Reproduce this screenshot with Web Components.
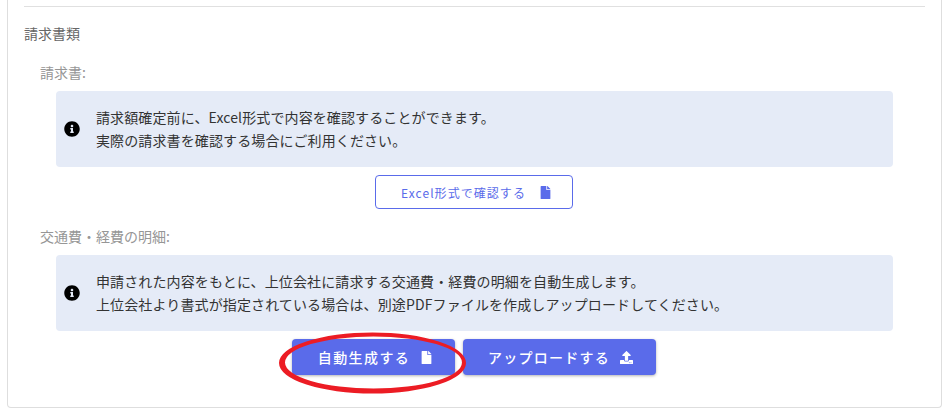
<!DOCTYPE html>
<html lang="ja">
<head>
<meta charset="utf-8">
<title>請求書類</title>
<style>
html, body { margin: 0; background: #fff; }
body {
	font-family: "Noto Sans CJK JP", "Noto Sans", sans-serif;
	height: 413px;
	overflow: hidden;
}
</style>
</head>
<body>
<billing-card>
	<section-title>請求書類</section-title>
	<doc-block label="請求書:">
		<info-alert>
			<div>請求額確定前に、Excel形式で内容を確認することができます。</div>
			<div>実際の請求書を確認する場合にご利用ください。</div>
		</info-alert>
		<action-row slot="actions">
			<action-button variant="outline" icon="file">Excel形式で確認する</action-button>
		</action-row>
	</doc-block>
	<doc-block label="交通費・経費の明細:">
		<info-alert>
			<div>申請された内容をもとに、上位会社に請求する交通費・経費の明細を自動生成します。</div>
			<div>上位会社より書式が指定されている場合は、別途PDFファイルを作成しアップロードしてください。</div>
		</info-alert>
		<action-row slot="actions">
			<action-button icon="file" style="--btn-width:163px;--btn-pad:4px">自動生成する</action-button>
			<action-button icon="upload" style="--btn-width:193px;--btn-pad:2px;--btn-spacing:1.25px">アップロードする</action-button>
		</action-row>
	</doc-block>
</billing-card>
<red-circle></red-circle>

<script>
(() => {
	const ICONS = {
		file: {
			box: "0 0 384 512",
			d: "M224 136V0H24C10.7 0 0 10.7 0 24v464c0 13.3 10.7 24 24 24h336c13.3 0 24-10.7 24-24V160H248c-13.2 0-24-10.8-24-24zm160-14.1v6.1H256V0h6.1c6.4 0 12.5 2.5 17 7l97.9 98c4.5 4.5 7 10.6 7 16.9z",
		},
		upload: {
			box: "0 0 512 512",
			d: "M296 384h-80c-13.3 0-24-10.7-24-24V192h-87.7c-17.8 0-26.7-21.5-14.1-34.1L242.3 5.7c7.5-7.5 19.8-7.5 27.3 0l152.2 152.2c12.6 12.6 3.7 34.1-14.1 34.1H320v168c0 13.3-10.7 24-24 24zm216-8v112c0 13.3-10.7 24-24 24H24c-13.3 0-24-10.7-24-24V376c0-13.3 10.7-24 24-24h136v8c0 30.9 25.1 56 56 56h80c30.9 0 56-25.1 56-56v-8h136c13.3 0 24 10.7 24 24zm-124 88c0-11-9-20-20-20s-20 9-20 20 9 20 20 20 20-9 20-20zm64 0c0-11-9-20-20-20s-20 9-20 20 9 20 20 20 20-9 20-20z",
		},
		info: {
			box: "0 0 512 512",
			d: "M256 8C119.043 8 8 119.083 8 256c0 136.997 111.043 248 248 248s248-111.003 248-248C504 119.083 392.957 8 256 8zm0 110c23.196 0 42 18.804 42 42s-18.804 42-42 42-42-18.804-42-42 18.804-42 42-42zm56 254c0 6.627-5.373 12-12 12h-88c-6.627 0-12-5.373-12-12v-24c0-6.627 5.373-12 12-12h12v-64h-12c-6.627 0-12-5.373-12-12v-24c0-6.627 5.373-12 12-12h64c6.627 0 12 5.373 12 12v100h12c6.627 0 12 5.373 12 12v24z",
		},
	};

	function iconSvg(name, size) {
		const icon = ICONS[name];
		return `<svg width="${size}" height="${size}" viewBox="${icon.box}" fill="currentColor" aria-hidden="true"><path d="${icon.d}"/></svg>`;
	}

	function define(name, css, html) {
		customElements.define(
			name,
			class extends HTMLElement {
				constructor() {
					super();
					const root = this.attachShadow({ mode: "open" });
					root.innerHTML = `<style>${css}</style>${typeof html === "function" ? html(this) : html}`;
				}
			},
		);
	}

	define("billing-card", `
:host {
	display: block;
	box-sizing: border-box;
	height: 408px;
	margin: 0 9px 0 7px;
	padding: 6px 16px 0;
	background: #fff;
	border: 1px solid #dedede;
	border-top: none;
	border-radius: 0 0 4px 4px;
}
hr {
	height: 1px;
	margin: 0 0 16px;
	border: none;
	background: #e0e0e0;
}
`, `<hr><slot></slot>`);

	define("section-title", `
:host {
	display: block;
	color: #666;
	font-size: 14px;
	line-height: 21px;
	margin-bottom: 18px;
}
`, `<slot></slot>`);

	define("doc-block", `
:host {
	display: block;
	padding-left: 16px;
}
.label {
	color: #969696;
	font-size: 14px;
	line-height: 21px;
	margin-bottom: 8px;
}
.actions {
	margin: 8px 17px 17px 0;
}
`, (el) => `<div class="label">${el.getAttribute("label")}</div><slot></slot><div class="actions"><slot name="actions"></slot></div>`);

	define("info-alert", `
:host {
	display: flex;
	align-items: center;
	box-sizing: border-box;
	height: 76px;
	margin: 0 32px 0 16px;
	padding: 0 8px;
	gap: 16px;
	background: #e5ebf7;
	border-radius: 4px;
	color: #333;
	font-size: 14px;
	line-height: 23px;
	letter-spacing: 0.12px;
}
svg {
	flex: none;
	color: #000;
}
`, iconSvg("info", 16) + `<div><slot></slot></div>`);

	define("action-row", `
:host {
	display: flex;
	justify-content: center;
	gap: 8px;
}
`, `<slot></slot>`);

	define("action-button", `
:host {
	display: inline-flex;
	align-items: center;
	justify-content: center;
	box-sizing: border-box;
	width: var(--btn-width, auto);
	height: 36px;
	padding-left: var(--btn-pad, 0);
	gap: 10px;
	background: #5a6bea;
	border-radius: 4px;
	box-shadow: 0 1px 3px rgba(0, 0, 0, 0.3);
	color: #fff;
	font-size: 14px;
	font-weight: 500;
	letter-spacing: var(--btn-spacing, 1.4px);
}
:host([variant="outline"]) {
	width: 198px;
	height: 34px;
	padding-left: 5px;
	gap: 13px;
	background: #fff;
	border: 1px solid #5a6bea;
	box-shadow: none;
	color: #5a6bea;
	font-size: 12px;
	font-weight: 400;
	letter-spacing: 1.05px;
}
`, (el) => `<span><slot></slot></span>` + iconSvg(el.getAttribute("icon"), 13));

	define("red-circle", `
:host {
	position: absolute;
	left: 275px;
	top: 329px;
	width: 196px;
	height: 68px;
}
svg { display: block; }
`, `<svg width="196" height="68" viewBox="275 329 196 68"><path fill="#ec1c24" fill-rule="evenodd" d="M279 363a93.5 30.5 0 1 0 187 0a93.5 30.5 0 1 0 -187 0zM285 362.5a88.5 26 0 1 1 177 0a88.5 26 0 1 1 -177 0z"/></svg>`);
})();
</script>
</body>
</html>
